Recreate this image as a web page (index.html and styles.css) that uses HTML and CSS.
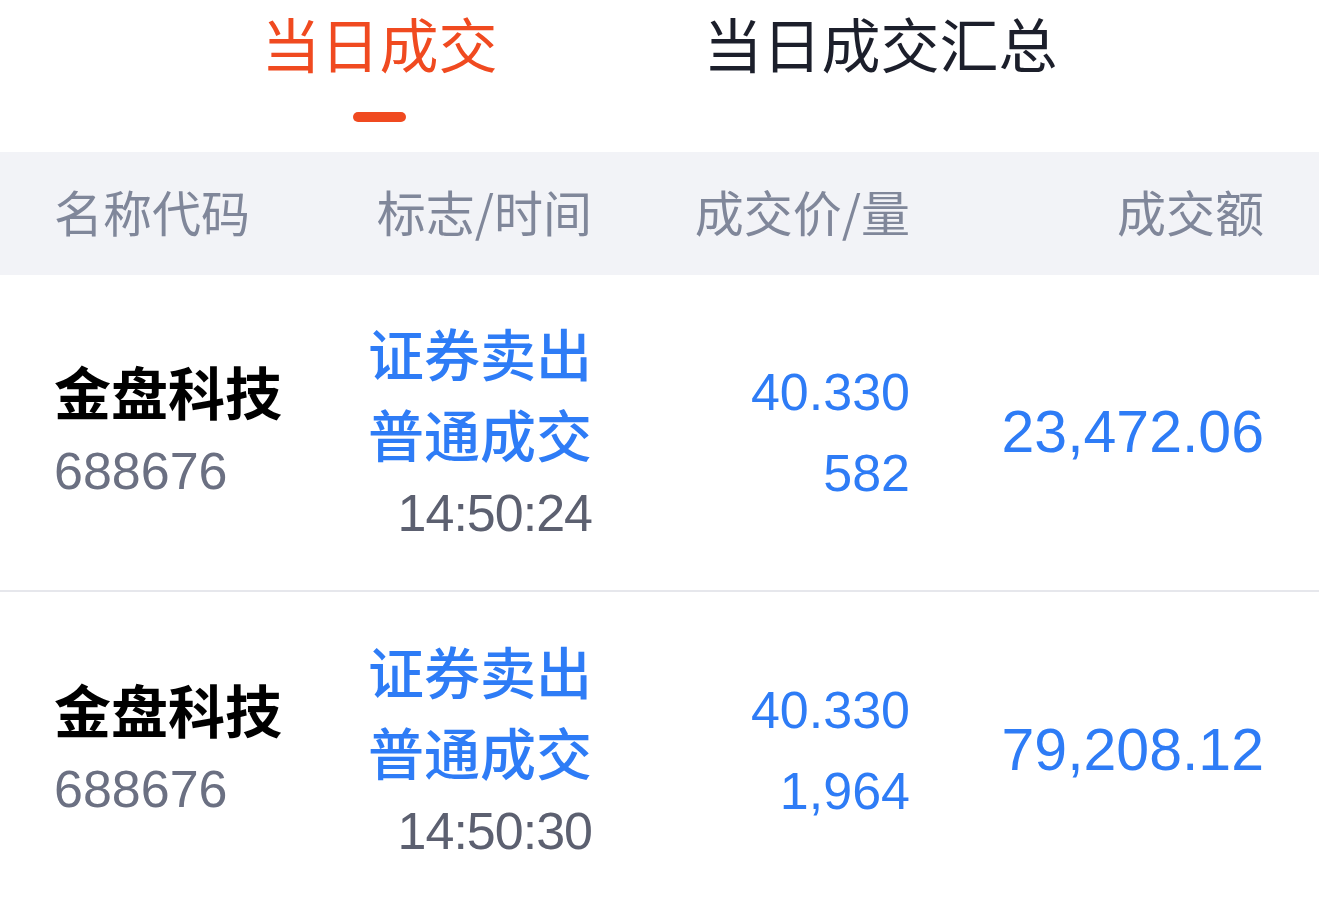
FILE: index.html
```html
<!DOCTYPE html>
<html lang="zh-CN">
<head>
        <meta charset="UTF-8">
        <meta name="viewport" content="width=device-width, initial-scale=1.0">
        <title>当日成交</title>
        <link rel="stylesheet" href="styles.css">
</head>
<body>
        <div class="tabs">
                <div class="tab active">当日成交</div>
                <div class="tab">当日成交汇总</div>
        </div>

        <div class="head">
                <div class="c-name">名称代码</div>
                <div class="c-flag">标志/时间</div>
                <div class="c-price">成交价/量</div>
                <div class="c-amount">成交额</div>
        </div>

        <div class="row">
                <div class="c-name">
                        <div class="stock">金盘科技</div>
                        <div class="code">688676</div>
                </div>
                <div class="c-flag">
                        <div class="blue">证券卖出</div>
                        <div class="blue">普通成交</div>
                        <div class="time">14:50:24</div>
                </div>
                <div class="c-price">
                        <div class="num">40.330</div>
                        <div class="num">582</div>
                </div>
                <div class="c-amount">
                        <div class="amount">23,472.06</div>
                </div>
        </div>

        <div class="row">
                <div class="c-name">
                        <div class="stock">金盘科技</div>
                        <div class="code">688676</div>
                </div>
                <div class="c-flag">
                        <div class="blue">证券卖出</div>
                        <div class="blue">普通成交</div>
                        <div class="time">14:50:30</div>
                </div>
                <div class="c-price">
                        <div class="num">40.330</div>
                        <div class="num">1,964</div>
                </div>
                <div class="c-amount">
                        <div class="amount">79,208.12</div>
                </div>
        </div>
</body>
</html>
```

FILE: styles.css
```css
*{
        margin: 0;
        padding: 0;
        box-sizing: border-box;
}
body{
        background: #fff;
        font-family: "Liberation Sans", "Noto Sans CJK SC", sans-serif;
        overflow: hidden;
}
.tabs{
        height: 152px;
        display: flex;
        justify-content: center;
        gap: 206px;
        padding-top: 9px;
}
.tab{
        font-family: "Noto Sans CJK SC", sans-serif;
        font-size: 59px;
        line-height: 68px;
        color: #1c1f2b;
        position: relative;
}
.tab.active{
        color: #f04a20;
}
.tab.active::after{
        content: "";
        position: absolute;
        left: 50%;
        top: 103px;
        width: 53px;
        height: 10px;
        margin-left: -26px;
        border-radius: 5px;
        background: #f04a20;
}
.head, .row{
        display: grid;
        grid-template-columns: 286px 252px 318px 1fr;
        padding: 0 55px 0 54px;
        align-items: center;
}
.head{
        height: 123px;
        background: #f2f3f7;
        color: #80879a;
        font-family: "Noto Sans CJK SC", sans-serif;
        font-size: 49px;
        padding-bottom: 6px;
}
.c-flag, .c-price, .c-amount{
        text-align: right;
}
.row{
        height: 317px;
        line-height: 81px;
        border-bottom: 2px solid #e6e7ec;
}
.row:last-child{
        border-bottom: none;
}
.stock{
        font-family: "Noto Sans CJK SC", sans-serif;
        font-weight: 700;
        font-size: 57px;
        color: #000;
        margin-top: -4px;
}
.code{
        font-size: 52px;
        color: #6b7082;
}
.blue{
        font-family: "Noto Sans CJK SC", sans-serif;
        font-weight: 500;
        font-size: 56px;
        color: #2e7cf6;
}
.time{
        font-size: 52px;
        color: #5c6070;
        letter-spacing: -1px;
}
.num{
        font-size: 52px;
        color: #2e7cf6;
}
.amount{
        font-size: 59px;
        color: #2e7cf6;
}
```
